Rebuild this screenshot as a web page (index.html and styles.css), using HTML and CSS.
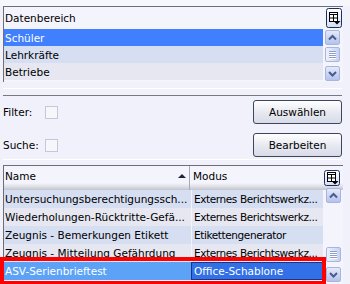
FILE: index.html
```html
<!DOCTYPE html>
<html>
<head>
<meta charset="utf-8">
<link rel="stylesheet" href="styles.css">
</head>
<body>
<div class="page">
  <div class="topstrip"></div>
  <div class="panel p1">
    <div class="hdr">
      <span class="htext">Datenbereich</span>
      <span class="colbtn">
        <svg width="16" height="20" viewBox="0 0 16 20"><defs><linearGradient id="g1" x1="0" y1="0" x2="0" y2="1"><stop offset="0" stop-color="#ffffff"/><stop offset="1" stop-color="#d6def2"/></linearGradient></defs><rect x="0.5" y="0.5" width="15" height="19" rx="2" fill="url(#g1)" stroke="#1e2e5e"/><rect x="3.5" y="4.5" width="8" height="9" fill="#fff" stroke="#000"/><line x1="3.5" y1="6.5" x2="11.5" y2="6.5" stroke="#000"/><line x1="7.5" y1="6.5" x2="7.5" y2="13.5" stroke="#000"/><line x1="3.5" y1="10" x2="11.5" y2="10" stroke="#000"/><polygon points="7.5,13 14.5,13 11,16.5" fill="#000"/></svg>
      </span>
    </div>
    <div class="body b1">
      <div class="rows rows1">
        <div class="row r17 sel">Schüler</div>
        <div class="row r17 alt">Lehrkräfte</div>
        <div class="row r17 gray">Betriebe</div>
      </div>
      <div class="sbar s1">
        <div class="sbtn"><svg width="13" height="13" viewBox="0 0 13 13"><polyline points="3,8.5 6.5,5 10,8.5" fill="none" stroke="#4a5a8e" stroke-width="2"/></svg></div>
        <div class="thumb t1"><span></span><span></span><span></span><span></span></div>
        <div class="sbtn down1"><svg width="13" height="13" viewBox="0 0 13 13"><polyline points="3,5 6.5,8.5 10,5" fill="none" stroke="#4a5a8e" stroke-width="2"/></svg></div>
      </div>
    </div>
  </div>
  <div class="wline w1"></div>
  <div class="gline"></div>
  <div class="ctrls">
    <div class="crow">
      <span class="lbl">Filter:</span><span class="chk"></span>
      <span class="btn">Auswählen</span>
    </div>
    <div class="crow r2">
      <span class="lbl">Suche:</span><span class="chk"></span>
      <span class="btn">Bearbeiten</span>
    </div>
  </div>
  <div class="wline w2"></div>
  <div class="panel p2">
    <div class="hdr h2">
      <div class="hcell name"><span>Name</span><span class="sort"></span></div>
      <div class="hcell modus"><span>Modus</span></div>
      <span class="colbtn cb2">
        <svg width="16" height="16" viewBox="0 0 16 16"><defs><linearGradient id="g2" x1="0" y1="0" x2="0" y2="1"><stop offset="0" stop-color="#ffffff"/><stop offset="1" stop-color="#d6def2"/></linearGradient></defs><rect x="0.5" y="0.5" width="15" height="15" rx="2" fill="url(#g2)" stroke="#1e2e5e"/><rect x="3.5" y="2.5" width="8" height="9" fill="#fff" stroke="#000"/><line x1="3.5" y1="4.5" x2="11.5" y2="4.5" stroke="#000"/><line x1="7.5" y1="4.5" x2="7.5" y2="11.5" stroke="#000"/><line x1="3.5" y1="8" x2="11.5" y2="8" stroke="#000"/><polygon points="7.5,11 14.5,11 11,14.5" fill="#000"/></svg>
      </span>
    </div>
    <div class="body b2">
      <div class="rows">
        <div class="row r18 alt"><span class="c cn">Untersuchungsberechtigungssch...</span><span class="c cm">Externes Berichtswerkz...</span></div>
        <div class="row r18 gray"><span class="c cn">Wiederholungen-Rücktritte-Gefä...</span><span class="c cm">Externes Berichtswerkz...</span></div>
        <div class="row r18 alt"><span class="c cn">Zeugnis - Bemerkungen Etikett</span><span class="c cm">Etikettengenerator</span></div>
        <div class="row r18 gray"><span class="c cn">Zeugnis - Mitteilung Gefährdung</span><span class="c cm">Externes Berichtswerkz...</span></div>
        <div class="row r18 cur"><span class="c cn">ASV-Serienbrieftest</span><span class="c cm focus">Office-Schablone</span></div>
      </div>
      <div class="sbar s2">
        <div class="sbtn"><svg width="13" height="13" viewBox="0 0 13 13"><polyline points="3,8.5 6.5,5 10,8.5" fill="none" stroke="#4a5a8e" stroke-width="2"/></svg></div>
        <div class="thumb t2"><span></span><span></span><span></span><span></span></div>
        <div class="sbtn down2"><svg width="13" height="13" viewBox="0 0 13 13"><polyline points="3,5 6.5,8.5 10,5" fill="none" stroke="#4a5a8e" stroke-width="2"/></svg></div>
      </div>
    </div>
  </div>
  <div class="redbox"></div>
</div>
</body>
</html>
```
FILE: styles.css
```css
html, body {
  margin: 0;
  padding: 0;
}
body {
  background: #f1f1fb;
  font-family: "DejaVu Sans", Verdana, sans-serif;
  font-size: 10.5px;
  color: #000;
  width: 350px;
  height: 284px;
  overflow: hidden;
}
.page {
  position: relative;
  width: 350px;
  height: 284px;
  overflow: hidden;
}
.topstrip {
  height: 6px;
  background: #f6f6fd;
}
.panel {
  margin-left: 3px;
  width: 339px;
  border-top: 1px solid #6e6e78;
  border-left: 1px solid #6e6e78;
  background: #f4f4fc;
}
.hdr {
  display: flex;
  align-items: center;
  height: 21px;
}
.htext {
  padding-left: 1px;
  flex: 1;
}
.colbtn {
  display: flex;
  width: 16px;
  margin-right: 1px;
}
.p1 .colbtn {
  align-self: flex-start;
  margin-top: 1px;
}
.body {
  display: flex;
}
.b1 {
  height: 54px;
}
.rows {
  width: 319px;
  display: flex;
  flex-direction: column;
}
.rows1 {
  margin-top: 1px;
}
.row {
  display: flex;
  align-items: center;
  padding-left: 1px;
  white-space: nowrap;
  overflow: hidden;
}
.r17 { height: 17px; }
.r18 { height: 18px; padding-left: 0; }
.sel { background: #4080ff; color: #fff; }
.alt { background: #d6def2; }
.gray { background: #e6e7f1; }
.sbar {
  margin-left: 2px;
  width: 15px;
  display: flex;
  flex-direction: column;
}
.sbtn, .thumb {
  width: 15px;
  height: 15px;
  flex: none;
  box-sizing: border-box;
  border: 1px solid #a9b5dc;
  border-radius: 2px;
  background: linear-gradient(#e4eafb, #b4c2ec);
  display: flex;
  align-items: center;
  justify-content: center;
}
.s1 { padding-top: 2px; }
.t1 { margin-top: 2px; }
.down1 { margin-top: 4px; }
.thumb {
  flex-direction: column;
  gap: 1px;
  background: linear-gradient(90deg, #eef2fd, #c6d2f2);
}
.thumb span {
  display: block;
  width: 7px;
  height: 1px;
  background: #8e9cc8;
  box-shadow: 0 1px 0 #ffffff;
}
.wline {
  height: 1px;
  background: #ffffff;
}
.w1 { margin-top: 6px; margin-left: 3px; width: 339px; }
.gline {
  margin-top: 6px;
  margin-left: 3px;
  width: 339px;
  height: 1px;
  background: #787882;
}
.ctrls {
  height: 63px;
  padding-top: 4px;
  box-sizing: border-box;
}
.crow {
  display: flex;
  align-items: center;
  height: 24px;
  margin-right: 8px;
}
.r2 { margin-top: 9px; }
.lbl {
  padding-left: 3px;
  width: 42px;
}
.chk {
  width: 13px;
  height: 13px;
  box-sizing: border-box;
  border: 1px solid #c4c8d8;
  background: #f6f6fb;
}
.btn {
  margin-left: auto;
  width: 89px;
  height: 24px;
  box-sizing: border-box;
  border: 1px solid #3c4660;
  border-radius: 3px;
  background: linear-gradient(#ffffff, #e6e8f0 55%, #d8dce8);
  display: flex;
  align-items: center;
  justify-content: center;
}
.w2 { margin-left: 3px; width: 339px; }
.p2 { margin-top: 5px; }
.h2 {
  height: 24px;
  background: linear-gradient(#f4f4fc 0, #f4f4fc 17px, #e2e2ea 20px, #c4c4ce 24px);
  align-items: stretch;
}
.hcell {
  display: flex;
  align-items: center;
  padding-bottom: 5px;
  box-sizing: border-box;
}
.name {
  width: 186px;
  padding-left: 1px;
  border-right: 1px solid #a4a8c0;
}
.name span:first-child { flex: 1; }
.sort {
  width: 0;
  height: 0;
  border-left: 4px solid transparent;
  border-right: 4px solid transparent;
  border-bottom: 4px solid #1c2438;
  margin-right: 3px;
}
.modus {
  width: 132px;
  padding-left: 3px;
}
.cb2 {
  align-self: flex-start;
  margin-top: 4px;
  margin-left: 2px;
}
.b2 { height: 94px; }
.c {
  display: flex;
  align-items: center;
  height: 100%;
  box-sizing: border-box;
  overflow: hidden;
  white-space: nowrap;
}
.cn {
  width: 187px;
  padding-left: 1px;
}
.cm {
  width: 132px;
  padding-left: 2px;
  letter-spacing: -0.4px;
  border-left: 1px solid #f2f4fc;
}
.cur .cn { background: #5ca2f6; color: #fff; }
.cur .cm.focus {
  background: #3270e8;
  color: #fff;
  border: 1px solid #1a3486;
  padding-left: 2px;
  letter-spacing: 0;
}
.s2 { margin-left: 3px; margin-top: -2px; }
.s2 .thumb { margin-top: 44px; }
.down2 { margin-top: 5px; }
.redbox {
  position: absolute;
  left: 0;
  top: 257px;
  width: 326px;
  height: 28px;
  box-sizing: border-box;
  border: 4px solid #ff0000;
}
```
